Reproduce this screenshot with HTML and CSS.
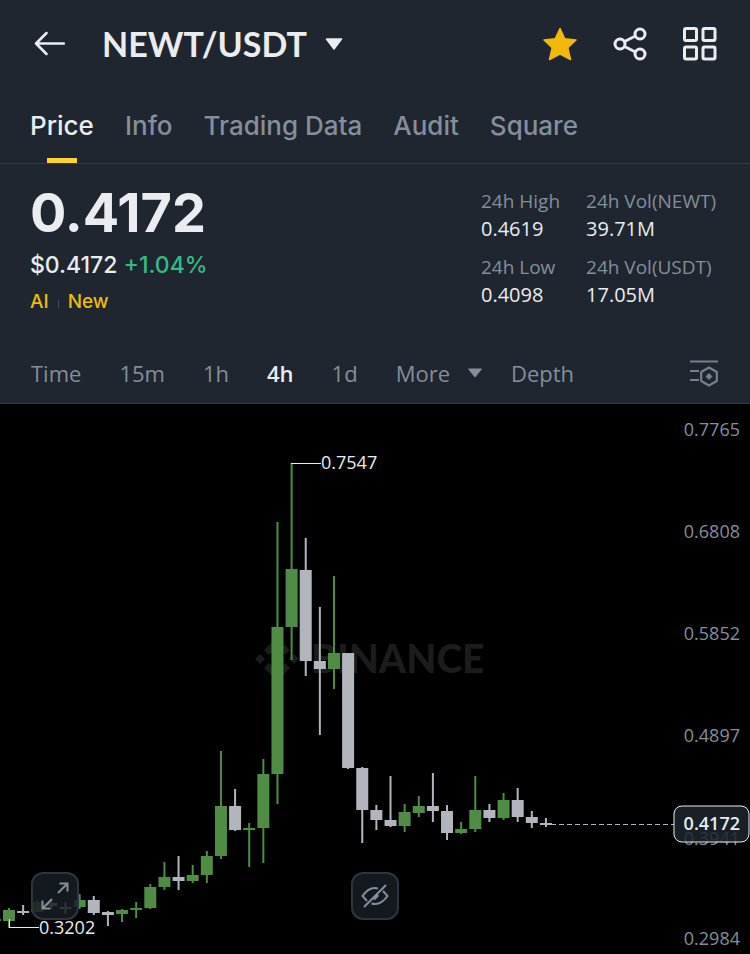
FILE: index.html
```
<!DOCTYPE html>
<html lang="en">
<head>
  <meta charset="UTF-8">
  <meta name="viewport" content="width=device-width, initial-scale=1">
  <title>NEWT/USDT</title>
  <link rel="stylesheet" href="styles.css">
</head>
<body>
  <header class="topbar">
    <button class="icon-btn back" aria-label="Back">
      <svg width="32" height="26" viewBox="0 0 32 26"><path d="M13.500 2L3 12.500L13.500 23M3 12.500H31" fill="none" stroke="#eaecef" stroke-width="2.500" stroke-linecap="round" stroke-linejoin="round"/></svg>
    </button>
    <button class="pair">
      <h1>NEWT/USDT</h1>
      <svg width="18" height="12" viewBox="0 0 18 12"><path d="M1.500 1H16.500L9 11Z" fill="#eaecef" stroke="#eaecef" stroke-width="1.500" stroke-linejoin="round"/></svg>
    </button>
    <div class="actions">
      <button class="icon-btn" aria-label="Favorite">
        <svg width="34" height="34" viewBox="0 0 34 34"><path d="M17 1.500L21.800 11.800L33 12.900L24.800 20.600L27.500 32.500L17 27L6.500 32.500L9.200 20.600L1 12.900L12.200 11.800Z" fill="#f0b90b" stroke="#f0b90b" stroke-width="1.500" stroke-linejoin="round"/></svg>
      </button>
      <button class="icon-btn" aria-label="Share">
        <svg width="34" height="34" viewBox="0 0 34 34" fill="none" stroke="#eaecef" stroke-width="3"><circle cx="7" cy="17" r="5"/><circle cx="27" cy="7" r="5"/><circle cx="27" cy="27" r="5"/><path d="M11.500 14.500L22.500 9M11.500 19.500L22.500 25"/></svg>
      </button>
      <button class="icon-btn" aria-label="Widgets">
        <svg width="34" height="34" viewBox="0 0 34 34" fill="none" stroke="#eaecef" stroke-width="3"><rect x="1.500" y="1.500" width="12" height="12" rx="1.500"/><rect x="20" y="1.500" width="12" height="12" rx="1.500"/><rect x="1.500" y="20" width="12" height="12" rx="1.500"/><rect x="20" y="20" width="12" height="12" rx="1.500"/></svg>
      </button>
    </div>
  </header>

  <nav class="tabs">
    <a href="#" class="active">Price</a>
    <a href="#">Info</a>
    <a href="#">Trading Data</a>
    <a href="#">Audit</a>
    <a href="#">Square</a>
  </nav>

  <section class="summary">
    <div>
      <div class="last-price">0.4172</div>
      <div class="fiat">$0.4172 <span class="up">+1.04%</span></div>
      <div class="tags"><a href="#">AI</a><a href="#">New</a></div>
    </div>
    <dl class="stats">
      <div><dt>24h High</dt><dd>0.4619</dd></div>
      <div><dt>24h Vol(NEWT)</dt><dd>39.71M</dd></div>
      <div><dt>24h Low</dt><dd>0.4098</dd></div>
      <div><dt>24h Vol(USDT)</dt><dd>17.05M</dd></div>
    </dl>
  </section>

  <div class="intervals">
    <button>Time</button>
    <button>15m</button>
    <button>1h</button>
    <button class="active">4h</button>
    <button>1d</button>
    <button class="more">More
      <svg width="16" height="10" viewBox="0 0 16 10"><path d="M1.500 1H14.500L8 9Z" fill="#848e9c" stroke="#848e9c" stroke-linejoin="round"/></svg>
    </button>
    <button class="depth">Depth</button>
    <button class="icon-btn settings" aria-label="Chart settings">
      <svg width="30" height="28" viewBox="0 0 30 28" fill="none" stroke="#76808f" stroke-width="2.200"><path d="M1 2.500H29M1 12H10M1 21H10"/><path d="M20 8.500L27.800 13V22L20 26.500L12.200 22V13Z" stroke-linejoin="round"/><path d="M20 14L23.500 17.500L20 21L16.500 17.500Z" fill="#76808f" stroke="none"/></svg>
    </button>
  </div>

  <main class="chart">
    <svg class="plot" viewBox="0 0 750 550">
      <g class="watermark">
        <path d="M277 233L290 246L285 251L277 243L269 251L264 246ZM260 250L265 255L260 260L255 255ZM277 250L282 255L277 260L272 255ZM294 250L299 255L294 260L289 255ZM264 264L269 259L277 267L285 259L290 264L277 277Z"/>
        <text x="311" y="269">BINANCE</text>
      </g>
      <g class="axis">
        <text x="740" y="32">0.7765</text>
        <text x="740" y="134">0.6808</text>
        <text x="740" y="236">0.5852</text>
        <text x="740" y="338">0.4897</text>
        <text x="740" y="441">0.3941</text>
        <text x="740" y="541">0.2984</text>
      </g>
      <g id="candles"></g>
      <path class="lead" d="M291 59H321M9 515V523H39"/>
      <text class="mark" x="321" y="65">0.7547</text>
      <text class="mark" x="39" y="530">0.3202</text>
      <path class="last-line" d="M551 420H674"/>
      <rect class="last-box" x="674" y="402" width="75" height="36" rx="8"/>
      <text class="last-text" x="740" y="426">0.4172</text>
    </svg>
    <button class="float expand" aria-label="Full screen">
      <svg width="28" height="28" viewBox="0 0 28 28" fill="none" stroke="#848e9c" stroke-width="2"><path d="M17 11L26.500 1.500M18.500 1.500H26.500V9.500M11 17L1.500 26.500M1.500 18.500V26.500H9.500"/></svg>
    </button>
    <button class="float hide" aria-label="Hide drawings">
      <svg width="28" height="26" viewBox="0 0 28 26" fill="none" stroke="#848e9c" stroke-width="2"><path d="M17 5.500C10 3.500 5 8 1.500 13L6 18M10.500 20.500C18 22.500 23 18 26.500 13L22 8M3 24L25 2"/><path d="M16 10L18 13L14 17L11 16Z" fill="#848e9c" stroke="none"/></svg>
    </button>
  </main>

  <script>
    // [rising, high, body top, body bottom, low]
    const candles = [
      [1, 514, 515, 517, 518],
      [1, 504, 506, 517, 524],
      [0, 501, 507, 509, 511],
      [1, 496, 498, 508, 508],
      [0, 496, 499, 502, 505],
      [0, 498, 503, 505, 510],
      [1, 490, 496, 503, 505],
      [0, 492, 496, 509, 511],
      [0, 507, 508, 511, 522],
      [1, 505, 506, 510, 518],
      [1, 498, 504, 506, 514],
      [1, 480, 483, 504, 505],
      [1, 458, 473, 483, 486],
      [0, 452, 473, 477, 486],
      [1, 461, 471, 477, 479],
      [1, 447, 452, 471, 479],
      [1, 347, 402, 452, 455],
      [0, 385, 402, 426, 427],
      [1, 419, 424, 426, 463],
      [1, 355, 370, 424, 459],
      [1, 118, 223, 370, 400],
      [1, 59, 165, 223, 256],
      [0, 134, 166, 257, 272],
      [0, 203, 257, 265, 331],
      [1, 172, 249, 265, 285],
      [0, 249, 249, 364, 365],
      [0, 363, 364, 406, 439],
      [0, 401, 406, 416, 426],
      [0, 372, 416, 422, 423],
      [1, 400, 408, 422, 428],
      [1, 392, 402, 409, 413],
      [0, 369, 402, 407, 418],
      [0, 401, 407, 429, 436],
      [1, 418, 425, 429, 430],
      [1, 372, 406, 425, 428],
      [0, 400, 406, 414, 418],
      [1, 389, 396, 414, 416],
      [0, 384, 396, 413, 418],
      [0, 407, 413, 419, 424],
      [0, 414, 419, 421, 423]
    ];

    const step = 14.13;
    document.getElementById('candles').innerHTML = candles.map(([up, high, top, bottom, low], i) => {
      const x = 9 + (i - 1) * step;
      return `<g class="${up ? 'rise' : 'fall'}">
        <rect x="${x - 1}" y="${high}" width="2" height="${low - high}"/>
        <rect x="${x - 6}" y="${top}" width="12" height="${bottom - top}"/>
      </g>`;
    }).join('');
  </script>
</body>
</html>
```
FILE: styles.css
```
* {
  box-sizing: border-box;
}

body {
  margin: 0;
  background: #1f262f;
  color: #eaecef;
  font-family: "Open Sans", "Noto Sans", sans-serif;
}

button {
  padding: 0;
  border: none;
  background: none;
  color: inherit;
  font: inherit;
  cursor: pointer;
}

a {
  color: inherit;
  text-decoration: none;
}

svg {
  display: block;
}

.topbar {
  display: flex;
  align-items: center;
  height: 88px;
  padding: 0 33px;
}

.pair {
  display: flex;
  align-items: center;
  gap: 18px;
  margin-left: 37px;
}

h1 {
  margin: 0;
  font-family: Lato, sans-serif;
  font-size: 34px;
  line-height: 40px;
  font-weight: 700;
}

.actions {
  display: flex;
  gap: 36px;
  margin-left: auto;
}

.tabs {
  display: flex;
  gap: 31px;
  height: 76px;
  padding: 0 30px;
  border-bottom: 1px solid #323a45;
  color: #848e9c;
  font-family: Inter, sans-serif;
  font-size: 26px;
  line-height: 76px;
  font-weight: 500;
}

.tabs .active {
  position: relative;
  color: #eaecef;
}

.tabs .active::after {
  content: "";
  position: absolute;
  left: 50%;
  bottom: 0;
  width: 30px;
  height: 5px;
  margin-left: -15px;
  background: #fcd535;
}

.summary {
  display: flex;
  justify-content: space-between;
  height: 180px;
  padding: 19px 34px 0 30px;
}

.last-price {
  font-family: Inter, sans-serif;
  font-size: 54px;
  line-height: 60px;
  font-weight: 700;
}

.fiat {
  margin-top: 6px;
  font-family: Inter, sans-serif;
  font-size: 23px;
  line-height: 32px;
  font-weight: 500;
}

.up {
  color: #2ebd85;
}

.tags {
  display: flex;
  margin-top: 8px;
  color: #f0b90b;
  font-family: Inter, sans-serif;
  font-size: 19px;
  line-height: 26px;
  font-weight: 500;
}

.tags a + a::before {
  content: "";
  display: inline-block;
  width: 1px;
  height: 8px;
  margin: 0 9px;
  background: #474d57;
}

.stats {
  display: grid;
  grid-template-columns: auto auto;
  gap: 10px 26px;
  align-content: start;
  margin: 4px 0 0;
  font-size: 19px;
  line-height: 28px;
}

.stats dt {
  color: #848e9c;
}

.stats dd {
  margin: 0;
  font-size: 20px;
}

.intervals {
  display: flex;
  align-items: center;
  gap: 38px;
  height: 60px;
  padding: 0 31px 1px;
  border-bottom: 1px solid #323a45;
  color: #848e9c;
  font-size: 22px;
}

.intervals .active {
  color: #eaecef;
  font-weight: 600;
}

.more {
  display: flex;
  align-items: center;
  gap: 17px;
}

.depth {
  margin-left: -10px;
}

.settings {
  margin-left: auto;
}

.chart {
  position: relative;
  background: #000;
}

.plot {
  width: 100%;
  font-size: 18px;
}

.watermark {
  fill: #1c1c1c;
  font-family: Lato, sans-serif;
  font-size: 39px;
  font-weight: 900;
}

.axis {
  fill: #848e9c;
  text-anchor: end;
}

.rise {
  fill: #4f8d44;
}

.fall {
  fill: #b2b4be;
}

.lead {
  fill: none;
  stroke: #eaecef;
  shape-rendering: crispEdges;
}

.mark {
  fill: #eaecef;
}

.last-line {
  stroke: #b2b4be;
  stroke-dasharray: 5 3;
  shape-rendering: crispEdges;
}

.last-box {
  fill: #1f262fd9;
  stroke: #eaecef;
}

.last-text {
  fill: #eaecef;
  font-weight: 600;
  text-anchor: end;
}

.float {
  position: absolute;
  bottom: 34px;
  display: grid;
  place-items: center;
  width: 48px;
  height: 48px;
  border: 2px solid #2f353e;
  border-radius: 12px;
  background: #181c25d9;
}

.expand {
  left: 31px;
}

.hide {
  left: 50%;
  margin-left: -24px;
}
```
